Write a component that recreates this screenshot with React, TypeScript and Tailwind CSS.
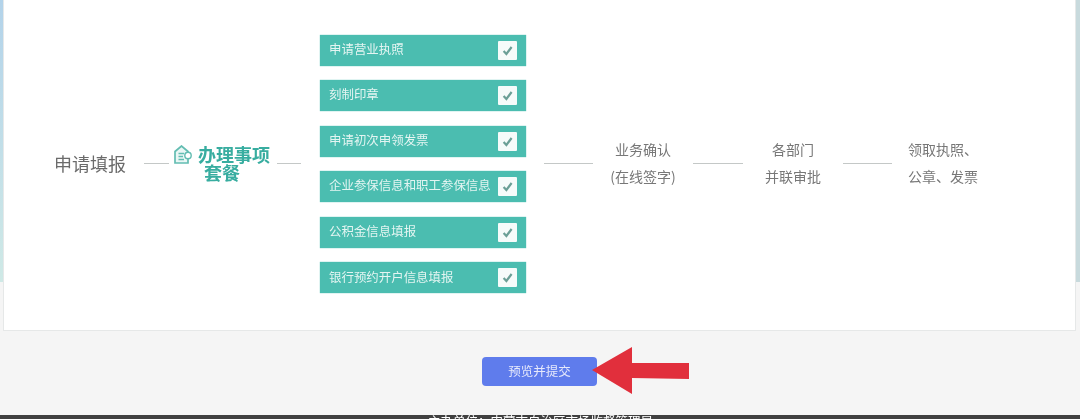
const font = { fontFamily: '"Noto Sans CJK SC", "Noto Sans", sans-serif' };

const items = [
  "申请营业执照",
  "刻制印章",
  "申请初次申领发票",
  "企业参保信息和职工参保信息",
  "公积金信息填报",
  "银行预约开户信息填报",
];

function Line({ className }: { className: string }) {
  return <div className={`h-px shrink-0 bg-[#c4c8c7] ${className}`} />;
}

function Check() {
  return (
    <div className="flex h-[19px] w-[19px] shrink-0 items-center justify-center rounded-[1px] bg-[#f6fbfa] blur-[0.4px]">
      <svg width="13" height="13" viewBox="0 0 13 13" fill="none">
        <path d="M2.6 7 L5.4 10 L10.6 3" stroke="#6b9f96" strokeWidth="2.2" />
      </svg>
    </div>
  );
}

function PackageIcon() {
  return (
    <svg width="18" height="19" viewBox="0 0 18 19" fill="none" className="shrink-0 blur-[0.4px]">
      <path d="M1 6.5 L7.5 1 L14 6.5 V18 H1 Z" stroke="#63bdb2" strokeWidth="1.7" fill="#eaf7f5" />
      <path d="M4.5 8.5 H10 M4.5 11.5 H9 M4.5 14.5 H10" stroke="#63bdb2" strokeWidth="1.3" />
      <circle cx="14" cy="10.5" r="3.2" stroke="#63bdb2" strokeWidth="1.4" fill="#ffffff" />
    </svg>
  );
}

export default function App() {
  return (
    <div className="flex h-[419px] w-[1080px] flex-col overflow-hidden bg-[#f5f5f5]" style={font}>
      <div className="flex h-[331px] shrink-0 items-start">
        <div className="h-[282px] w-[3px] shrink-0 bg-gradient-to-b from-[#b3d3ea] to-[#cfe9e6]" />
        <div className="flex h-[331px] flex-1 items-center border border-[#e6e8e8] border-t-0 bg-white pb-[4px] pl-[50px]">
          <div className="w-[72px] shrink-0 whitespace-nowrap text-[18px] leading-6 text-[#6b6b6b] blur-[0.5px]">
            申请填报
          </div>
          <Line className="ml-[18px] w-[25px]" />
          <div className="ml-[1.5px] mr-[3.5px] flex w-[103px] shrink-0 flex-col items-center">
            <div className="flex items-center gap-[6px]">
              <PackageIcon />
              <span className="whitespace-nowrap text-[18px] font-bold leading-[21px] text-[#38ada0] blur-[0.5px]">
                办理事项
              </span>
            </div>
            <span className="-mt-[3px] whitespace-nowrap text-[18px] font-bold leading-[21px] text-[#38ada0] blur-[0.5px]">
              套餐
            </span>
          </div>
          <Line className="w-[24px]" />
          <div className="ml-[18.5px] mt-[2px] flex w-[206px] shrink-0 flex-col gap-[14.6px]">
            {items.map((t) => (
              <div
                key={t}
                className="flex h-[31px] items-center justify-between bg-[#4bbdb0] pl-[9.5px] pr-[8.5px] shadow-[0_0_1px_#4bbdb0]"
              >
                <span className="mb-[2px] whitespace-nowrap text-[12.45px] text-[#e4f5f2] blur-[0.5px]">{t}</span>
                <Check />
              </div>
            ))}
          </div>
          <Line className="ml-[18.5px] w-[49px]" />
          <div className="flex w-[100px] shrink-0 flex-col items-center text-[14px] leading-[27px] text-[#777777] blur-[0.5px]">
            <span>业务确认</span>
            <span>(在线签字)</span>
          </div>
          <Line className="w-[50px]" />
          <div className="flex w-[100px] shrink-0 flex-col items-center text-[14px] leading-[27px] text-[#777777] blur-[0.5px]">
            <span>各部门</span>
            <span>并联审批</span>
          </div>
          <Line className="w-[49px]" />
          <div className="ml-[16px] flex flex-col text-[14px] leading-[27px] text-[#777777] blur-[0.5px]">
            <span>领取执照、</span>
            <span>公章、发票</span>
          </div>
        </div>
        <div className="h-[282px] w-[4px] shrink-0 bg-[#c8dadd]" />
      </div>
      <div className="relative flex flex-1 justify-center pt-[26px]">
        <button className="ml-[-1px] h-[29px] w-[115px] rounded-[4px] bg-[#5f7cec] text-[12.5px] text-[#e6e9fb]">
          <span className="blur-[0.5px]">预览并提交</span>
        </button>
        <svg
          width="100"
          height="50"
          viewBox="0 0 100 50"
          className="absolute left-[591px] top-[15px]"
        >
          <path d="M1 24 L41 1 V17 L98 17 V33 L41 32 V48 Z" fill="#e12f3c" />
        </svg>
      </div>
      <div className="flex h-[4px] shrink-0 justify-center overflow-hidden bg-[#404040] pl-[1px]">
        <span className="-mt-[2px] whitespace-nowrap text-[12.5px] leading-[16px] text-white blur-[0.4px]">
          主办单位：内蒙古自治区市场监督管理局
        </span>
      </div>
    </div>
  );
}
